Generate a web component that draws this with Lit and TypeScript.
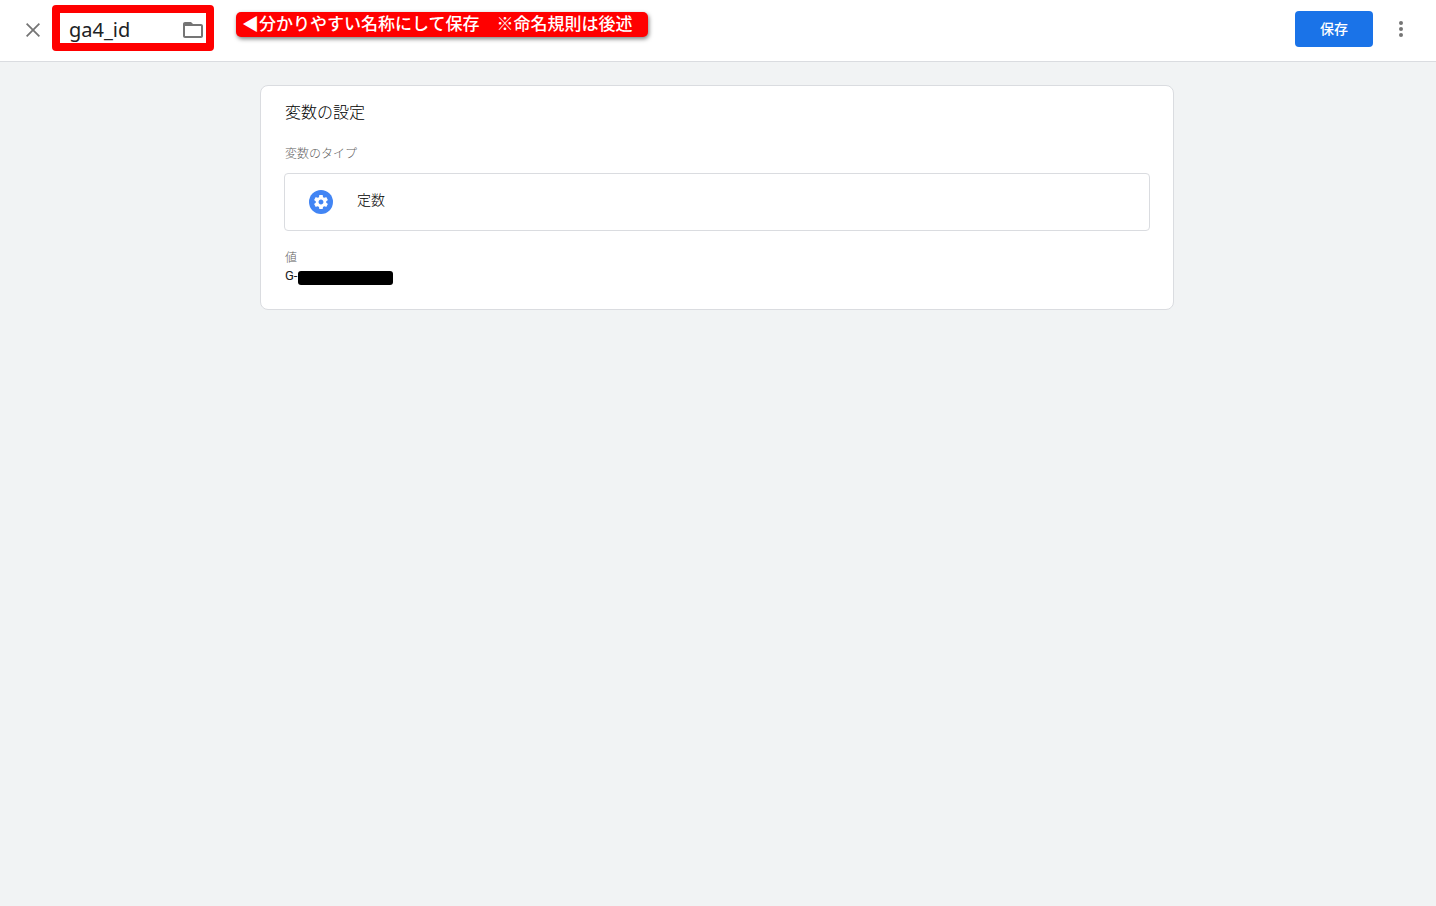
import { LitElement, html, css } from "lit";
import { customElement, state } from "lit/decorators.js";

@customElement("app-root")
export class AppRoot extends LitElement {
  @state() private name = "ga4_id";

  static styles = css`
    :host {
      display: block;
      min-height: 100vh;
      background: #f1f3f4;
      color: #202124;
      font-family: Roboto, "Noto Sans CJK JP", sans-serif;
      font-size: 14px;
    }
    * {
      box-sizing: border-box;
    }
    svg {
      display: block;
    }
    .header {
      display: flex;
      align-items: center;
      min-height: 62px;
      padding: 11px 23px 12px 21px;
      background: #fff;
      border-bottom: 1px solid #dadce0;
    }
    .icon-button {
      padding: 0;
      border: 0;
      background: none;
      color: #757575;
      cursor: pointer;
    }
    .name {
      position: relative;
      display: flex;
      align-items: center;
      gap: 8px;
      margin-left: 24px;
      color: #757575;
    }
    .name-input {
      width: 104px;
      height: 28px;
      padding: 0;
      border: 0;
      outline: 0;
      background: none;
      color: #202124;
      font: 20px/28px "Noto Sans", "Noto Sans CJK JP", sans-serif;
    }
    .frame {
      position: absolute;
      inset: -11px -9px -7px -17px;
      border: 8px solid #f00;
      border-radius: 4px;
      pointer-events: none;
    }
    .note {
      position: absolute;
      left: 167px;
      top: -4px;
      padding: 0 15px 4px 6px;
      border-radius: 5px;
      background: #f00;
      box-shadow: 1px 2px 4px rgba(0, 0, 0, 0.5);
      color: #fff;
      font: 500 17px/21px "Noto Sans CJK JP", sans-serif;
      white-space: nowrap;
    }
    .actions {
      display: flex;
      align-items: center;
      align-self: flex-start;
      gap: 16px;
      margin-left: auto;
    }
    .save {
      min-width: 78px;
      height: 36px;
      padding: 0 24px;
      border: 0;
      border-radius: 4px;
      background: #1a73e8;
      color: #fff;
      font: 500 14px/20px Roboto, "Noto Sans CJK JP", sans-serif;
      cursor: pointer;
    }
    .main {
      padding: 23px 26px 24px 24px;
    }
    .card {
      max-width: 914px;
      margin: 0 auto;
      padding: 15px 23px 22px;
      border: 1px solid #dadce0;
      border-radius: 8px;
      background: #fff;
    }
    .title {
      margin: 0;
      padding-left: 1px;
      color: #000;
      font-size: 16px;
      font-weight: 300;
      line-height: 24px;
    }
    .label {
      margin: 0;
      padding-left: 1px;
      color: #616161;
      font-size: 12px;
      font-weight: 300;
      line-height: 18px;
    }
    .title + .label {
      margin-top: 20px;
    }
    .type {
      display: flex;
      align-items: center;
      gap: 24px;
      width: 100%;
      height: 58px;
      margin: 10px 0 18px;
      padding: 0 24px;
      border: 1px solid #dadce0;
      border-radius: 4px;
      background: #fff;
      color: #000;
      font: 300 14px/20px Roboto, "Noto Sans CJK JP", sans-serif;
      text-align: left;
      cursor: pointer;
    }
    .type-name {
      padding-bottom: 4px;
    }
    .value {
      display: flex;
      align-items: center;
      gap: 1px;
      margin: 0;
      padding: 0 0 2px 1px;
      font-size: 13px;
      line-height: 18px;
    }
    .redacted {
      width: 95px;
      height: 14px;
      margin-top: 3px;
      border-radius: 3px;
      background: #000;
    }
  `;

  render() {
    return html`
      <header class="header">
        <button class="icon-button" aria-label="閉じる">
          <svg width="24" height="24" viewBox="0 0 24 24" fill="currentColor">
            <path d="M19 6.250 17.750 5 12 10.750 6.250 5 5 6.250 10.750 12 5 17.750 6.250 19 12 13.250 17.750 19 19 17.750 13.250 12z" />
          </svg>
        </button>
        <div class="name">
          <input
            class="name-input"
            aria-label="変数名"
            .value=${this.name}
            @input=${(e: Event) => (this.name = (e.target as HTMLInputElement).value)}
          />
          <button class="icon-button" aria-label="フォルダ">
            <svg width="24" height="24" viewBox="0 0 24 24" fill="currentColor">
              <path d="M20 6h-8l-2-2H4c-1.100 0-2 .9-2 2v12c0 1.100.9 2 2 2h16c1.100 0 2-.9 2-2V8c0-1.100-.9-2-2-2zm0 12H4V8h16v10z" />
            </svg>
          </button>
          <div class="frame"></div>
          <div class="note">◀分かりやすい名称にして保存　※命名規則は後述</div>
        </div>
        <div class="actions">
          <button class="save">保存</button>
          <button class="icon-button" aria-label="その他">
            <svg width="24" height="24" viewBox="0 0 24 24" fill="currentColor">
              <circle cx="12" cy="6" r="2" />
              <circle cx="12" cy="12" r="2" />
              <circle cx="12" cy="18" r="2" />
            </svg>
          </button>
        </div>
      </header>
      <main class="main">
        <section class="card">
          <h2 class="title">変数の設定</h2>
          <p class="label">変数のタイプ</p>
          <button class="type">
            <svg width="24" height="24" viewBox="0 0 24 24">
              <circle cx="12" cy="12" r="12" fill="#4285f4" />
              <path
                transform="translate(3.600 3.600) scale(.7)"
                fill="#fff"
                d="M19.430 12.980c.04-.32.07-.64.07-.98s-.03-.66-.07-.98l2.110-1.650c.19-.15.24-.42.12-.64l-2-3.460c-.12-.22-.39-.3-.61-.22l-2.490 1c-.52-.4-1.080-.73-1.690-.98l-.38-2.650C14.460 2.180 14.250 2 14 2h-4c-.25 0-.46.18-.49.42l-.38 2.650c-.61.25-1.170.59-1.690.98l-2.490-1c-.23-.09-.49 0-.61.22l-2 3.460c-.13.22-.07.49.12.64l2.110 1.650c-.04.32-.07.65-.07.98s.03.66.07.98l-2.110 1.650c-.19.15-.24.42-.12.64l2 3.460c.12.22.39.3.61.22l2.490-1c.52.4 1.080.73 1.690.98l.38 2.650c.03.24.24.42.49.42h4c.25 0 .46-.18.49-.42l.38-2.650c.61-.25 1.170-.59 1.690-.98l2.490 1c.23.09.49 0 .61-.22l2-3.460c.12-.22.07-.49-.12-.64l-2.110-1.650zM12 15.500c-1.930 0-3.500-1.570-3.500-3.500s1.570-3.500 3.500-3.500 3.500 1.570 3.500 3.500-1.570 3.500-3.500 3.500z"
              />
            </svg>
            <span class="type-name">定数</span>
          </button>
          <p class="label">値</p>
          <p class="value">G-<span class="redacted"></span></p>
        </section>
      </main>
    `;
  }
}
